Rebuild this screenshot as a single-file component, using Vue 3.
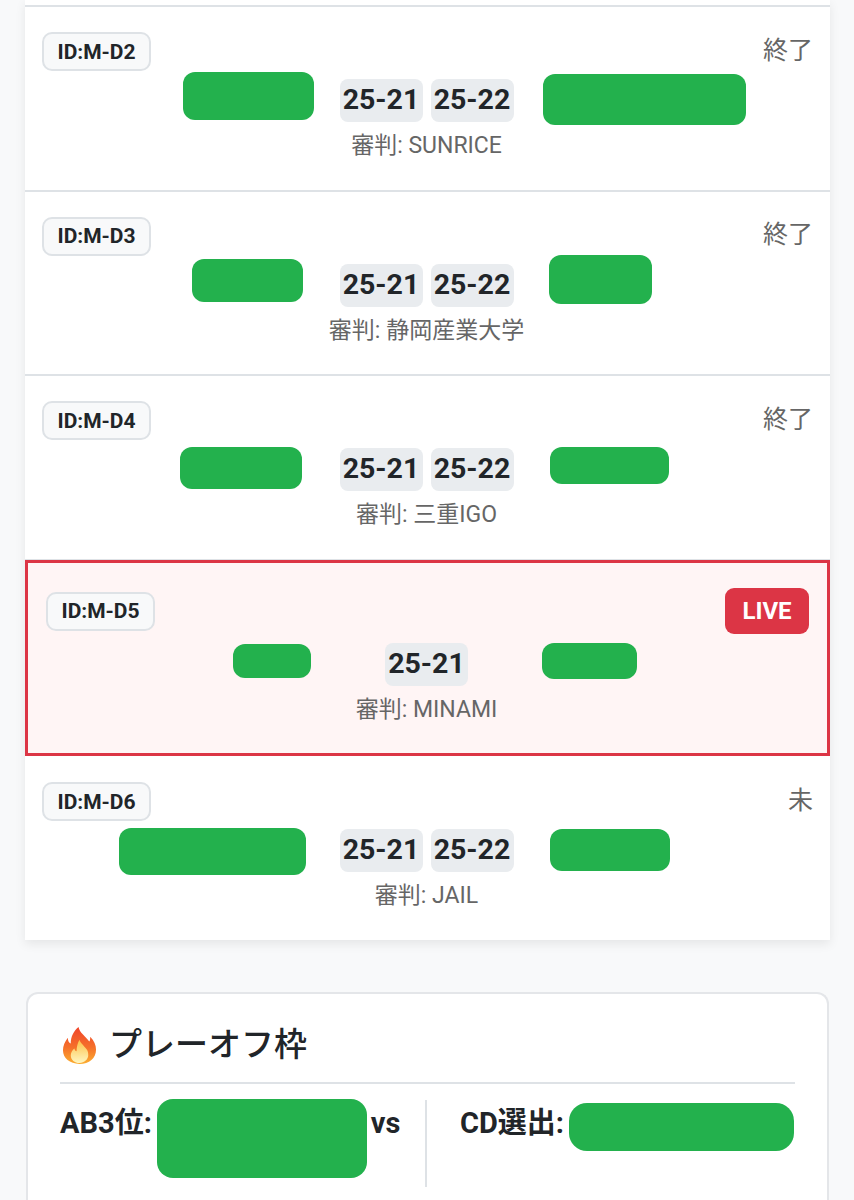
<template>
  <div class="page">
    <section class="match-list">
      <div class="row-stub"></div>
      <article
        v-for="match in matches"
        :key="match.id"
        class="match-row"
        :class="{ live: match.status === 'LIVE' }"
      >
        <header class="match-head">
          <span class="match-id">ID:{{ match.id }}</span>
          <span v-if="match.status === 'LIVE'" class="live-badge">LIVE</span>
          <span v-else class="status">{{ match.status }}</span>
        </header>
        <div class="match-body">
          <div class="team team-left">
            <span class="mask" :style="maskStyle(match.left)"></span>
          </div>
          <div class="scores">
            <span v-for="(score, i) in match.scores" :key="i" class="score">{{ score }}</span>
          </div>
          <div class="team team-right">
            <span class="mask" :style="maskStyle(match.right)"></span>
          </div>
        </div>
        <p class="referee">審判: {{ match.referee }}</p>
      </article>
    </section>

    <section class="playoff">
      <h2 class="playoff-title">
        <svg class="flame" viewBox="0 0 36 38" aria-hidden="true">
          <defs>
            <linearGradient id="flameOuter" x1="0" y1="0" x2="0" y2="1">
              <stop offset="0" stop-color="#f0442a" />
              <stop offset="0.55" stop-color="#f5702a" />
              <stop offset="1" stop-color="#fcae30" />
            </linearGradient>
            <linearGradient id="flameInner" x1="0" y1="0" x2="0" y2="1">
              <stop offset="0" stop-color="#fcc044" />
              <stop offset="1" stop-color="#fff6c0" />
            </linearGradient>
          </defs>
          <path
            fill="url(#flameOuter)"
            d="M17 0c1 6 7 9 11 15 1-1 1-3 1-5 4 4 6 9 6 13 0 9-7 15-17 15S1 32 1 24c0-5 2-9 5-13 0 3 1 5 3 6 0-7 3-13 8-17z"
          />
          <path
            fill="url(#flameInner)"
            d="M18 13c1 4 6 7 8 11 1 2 1 4 1 5 0 4-4 8-9 8s-9-3-9-8c0-3 2-6 4-7 0 1 0 2 2 3 0-4 1-9 3-12z"
          />
        </svg>
        <span>プレーオフ枠</span>
      </h2>
      <div class="playoff-grid">
        <div class="slot slot-left">
          <strong class="slot-label">AB3位:</strong>
          <span class="mask slot-mask-a"></span>
          <strong class="slot-vs">vs</strong>
        </div>
        <div class="slot slot-right">
          <strong class="slot-label">CD選出:</strong>
          <span class="mask slot-mask-b"></span>
        </div>
      </div>
    </section>
  </div>
</template>

<script setup>
// w: width of the blacked-out name, h: height, gap: distance to the scores, y: top relative to the scores
const matches = [
  {
    id: 'M-D2',
    status: '終了',
    scores: ['25-21', '25-22'],
    referee: 'SUNRICE',
    left: { w: 131, h: 48, gap: 26, y: -7 },
    right: { w: 203, h: 51, gap: 29, y: -5 }
  },
  {
    id: 'M-D3',
    status: '終了',
    scores: ['25-21', '25-22'],
    referee: '静岡産業大学',
    left: { w: 111, h: 43, gap: 37, y: -5 },
    right: { w: 103, h: 49, gap: 35, y: -9 }
  },
  {
    id: 'M-D4',
    status: '終了',
    scores: ['25-21', '25-22'],
    referee: '三重IGO',
    left: { w: 122, h: 42, gap: 38, y: -1 },
    right: { w: 119, h: 37, gap: 36, y: -1 }
  },
  {
    id: 'M-D5',
    status: 'LIVE',
    scores: ['25-21'],
    referee: 'MINAMI',
    left: { w: 78, h: 34, gap: 74, y: 1 },
    right: { w: 95, h: 36, gap: 74, y: 0 }
  },
  {
    id: 'M-D6',
    status: '未',
    scores: ['25-21', '25-22'],
    referee: 'JAIL',
    left: { w: 187, h: 47, gap: 34, y: -1 },
    right: { w: 120, h: 42, gap: 36, y: 0 }
  }
]

const maskStyle = (m) => ({
  width: `${m.w}px`,
  height: `${m.h}px`,
  marginTop: `${m.y}px`,
  '--gap': `${m.gap}px`
})
</script>

<style>
html,
body {
  margin: 0;
  background: #f8f9fa;
}
</style>

<style scoped>
.page {
  height: 1200px;
  overflow: hidden;
  background: #f8f9fa;
  font-family: Roboto, "Noto Sans CJK JP", sans-serif;
  color: #212529;
}

.match-list {
  margin: 0 24px 0 25px;
  background: #fff;
  box-shadow: 0 4px 10px rgba(0, 0, 0, 0.08);
}

.row-stub {
  box-sizing: border-box;
  height: 7px;
  border-bottom: 2px solid #dee2e6;
}

.match-row {
  box-sizing: border-box;
  height: 184.5px;
  padding: 25px 17px 0;
  border-bottom: 2px solid #dee2e6;
}

.match-row:last-child {
  border-bottom: 0;
  height: 184px;
  padding-top: 26px;
}

.match-row.live {
  height: 196.5px;
  margin-top: -1px;
  padding: 29px 18px 0;
  background: #fff5f5;
  border: 3px solid #dc3545;
}

.match-head {
  display: flex;
  justify-content: space-between;
  align-items: center;
  height: 39px;
}

.match-id {
  box-sizing: border-box;
  height: 39px;
  padding: 0 13.5px;
  display: flex;
  align-items: center;
  background: #f8f9fa;
  border: 2px solid #dee2e6;
  border-radius: 10px;
  font-size: 21px;
  font-weight: 700;
}

.status {
  margin: 0 0 8px 0;
  font-size: 25px;
  color: #666;
}

.live-badge {
  box-sizing: border-box;
  width: 84px;
  height: 46px;
  display: flex;
  align-items: center;
  justify-content: center;
  background: #dc3545;
  border-radius: 9px;
  color: #fff;
  font-size: 24px;
  font-weight: 700;
}

.match-body {
  height: 43px;
  margin: 8px 2px 0 0;
  display: grid;
  grid-template-columns: 1fr auto 1fr;
  align-items: start;
}

.team {
  display: flex;
}

.team-left {
  justify-content: flex-end;
}

.team-left .mask {
  margin-right: var(--gap);
}

.team-right .mask {
  margin-left: var(--gap);
}

.mask {
  display: block;
  background: #23b14d;
  border-radius: 12px;
}

.scores {
  display: flex;
  gap: 8px;
}

.score {
  box-sizing: border-box;
  width: 83px;
  height: 43px;
  padding-bottom: 2px;
  display: flex;
  align-items: center;
  justify-content: center;
  background: #e9ecef;
  border-radius: 8px;
  font-size: 28.5px;
  font-weight: 700;
}

.referee {
  margin: 10px 2px 0 0;
  text-align: center;
  font-size: 23px;
  line-height: 28px;
  color: #666;
}

.live .match-body {
  margin-top: 12px;
}

.playoff {
  box-sizing: border-box;
  height: 300px;
  margin: 52px 25px 0 26px;
  padding: 29px 32px 0;
  background: #fff;
  border: 2px solid #e4e6e9;
  border-bottom: 0;
  border-radius: 12px 12px 0 0;
}

.playoff-title {
  margin: 0;
  height: 59px;
  display: flex;
  align-items: flex-start;
  gap: 12px;
  border-bottom: 2px solid #dee2e6;
  font-size: 33px;
  line-height: 44px;
  font-weight: 500;
}

.flame {
  width: 35px;
  height: 37px;
  flex: none;
  margin: 4px 0 0 2px;
}

.playoff-grid {
  display: grid;
  grid-template-columns: 367px 1fr;
}

.slot {
  display: flex;
  align-items: flex-start;
  margin-top: 16px;
  font-size: 29px;
}

.slot-left {
  height: 87px;
  border-right: 2px solid #dee2e6;
}

.slot-label,
.slot-vs {
  margin-top: 7px;
  line-height: 32px;
}

.slot-mask-a {
  width: 210px;
  height: 79px;
  margin: -1px 0 0 5px;
  border-radius: 16px;
}

.slot-vs {
  margin-left: 4px;
}

.slot-right {
  padding-left: 33px;
}

.slot-mask-b {
  width: 225px;
  height: 48px;
  margin: 3px 0 0 5px;
  border-radius: 18px;
}
</style>
